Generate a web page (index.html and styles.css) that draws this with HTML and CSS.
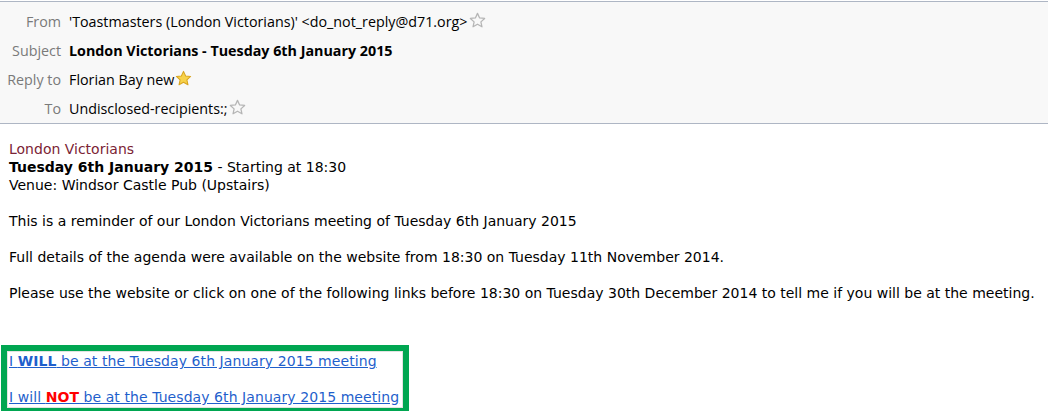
FILE: index.html
```html
<!DOCTYPE html>
<html>
<head>
<meta charset="utf-8">
<link rel="stylesheet" href="styles.css">
</head>
<body>
<div class="header">
  <div class="row">
    <div class="label">From</div>
    <div class="value">'Toastmasters (London Victorians)' &lt;do_not_reply@d71.org&gt;<svg class="star" viewBox="0 0 16 16"><path d="M8 1.3l2 4.3 4.7.5-3.5 3.2 1 4.6L8 11.5l-4.2 2.4 1-4.6L1.3 6.1 6 5.6z" fill="none" stroke="#b5b5b5" stroke-width="1.2" stroke-linejoin="round"/></svg></div>
  </div>
  <div class="row">
    <div class="label">Subject</div>
    <div class="value bold">London Victorians - Tuesday 6th January 2015</div>
  </div>
  <div class="row">
    <div class="label">Reply to</div>
    <div class="value">Florian Bay new<svg class="star" viewBox="0 0 16 16"><path d="M8 1.3l2 4.3 4.7.5-3.5 3.2 1 4.6L8 11.5l-4.2 2.4 1-4.6L1.3 6.1 6 5.6z" fill="#f7d24a" stroke="#d9a520" stroke-width="1" stroke-linejoin="round"/></svg></div>
  </div>
  <div class="row">
    <div class="label">To</div>
    <div class="value">Undisclosed-recipients:;<svg class="star" viewBox="0 0 16 16"><path d="M8 1.3l2 4.3 4.7.5-3.5 3.2 1 4.6L8 11.5l-4.2 2.4 1-4.6L1.3 6.1 6 5.6z" fill="none" stroke="#b5b5b5" stroke-width="1.2" stroke-linejoin="round"/></svg></div>
  </div>
</div>
<div class="body">
  <div class="club">London Victorians</div>
  <div><b>Tuesday 6th January 2015</b> - Starting at 18:30</div>
  <div>Venue: Windsor Castle Pub (Upstairs)</div>
  <p>This is a reminder of our London Victorians meeting of Tuesday 6th January 2015</p>
  <p>Full details of the agenda were available on the website from 18:30 on Tuesday 11th November 2014.</p>
  <p>Please use the website or click on one of the following links before 18:30 on Tuesday 30th December 2014 to tell me if you will be at the meeting.</p>
  <div class="spacer"></div>
  <div class="links">
    <div class="inner">
      <p><a href="#">I <b>WILL</b> be at the Tuesday 6th January 2015 meeting</a></p>
      <p><a href="#">I will <b class="not">NOT</b> be at the Tuesday 6th January 2015 meeting</a></p>
    </div>
  </div>
</div>
</body>
</html>
```
FILE: styles.css
```css
html, body { margin: 0; padding: 0; background: #fff; }
body { width: 1048px; height: 411px; overflow: hidden; }
.header {
  margin-top: 1px;
  background: #f8f8f8;
  border-top: 1px solid #aeb6c4;
  border-bottom: 1px solid #aeb6c4;
  padding: 5px 0 0;
  font-family: "Open Sans", "Noto Sans", sans-serif;
  font-size: 14.3px;
  color: #000;
}
.row { display: flex; height: 29px; align-items: center; }
.label { width: 61px; text-align: right; color: #7a7a7a; padding-right: 8px; }
.value { display: flex; align-items: center; }
.bold { font-weight: 700; }
.star { width: 17px; height: 17px; margin-left: 1px; margin-top: -3px; }
.body {
  padding: 16px 9px 0;
  font-family: Verdana, "DejaVu Sans", sans-serif;
  font-size: 14px;
  line-height: 18px;
  color: #000;
}
.club { color: #7b2335; }
.body p { margin: 18px 0; }
.spacer { height: 25px; }
.links {
  display: inline-block;
  border: 6px solid #00a651;
  margin-left: -8px;
}
.inner {
  border: 1px solid #e2e2e2;
  padding: 0 3px 1px 1px;
  letter-spacing: 0.07px;
}
.links p { margin: 0 0 18px; }
.links p:last-child { margin-bottom: 0; }
.links a { color: #1f5fcc; text-decoration: underline; }
.links b { color: #1f5fcc; }
.links b.not { color: #ff0000; }
```
